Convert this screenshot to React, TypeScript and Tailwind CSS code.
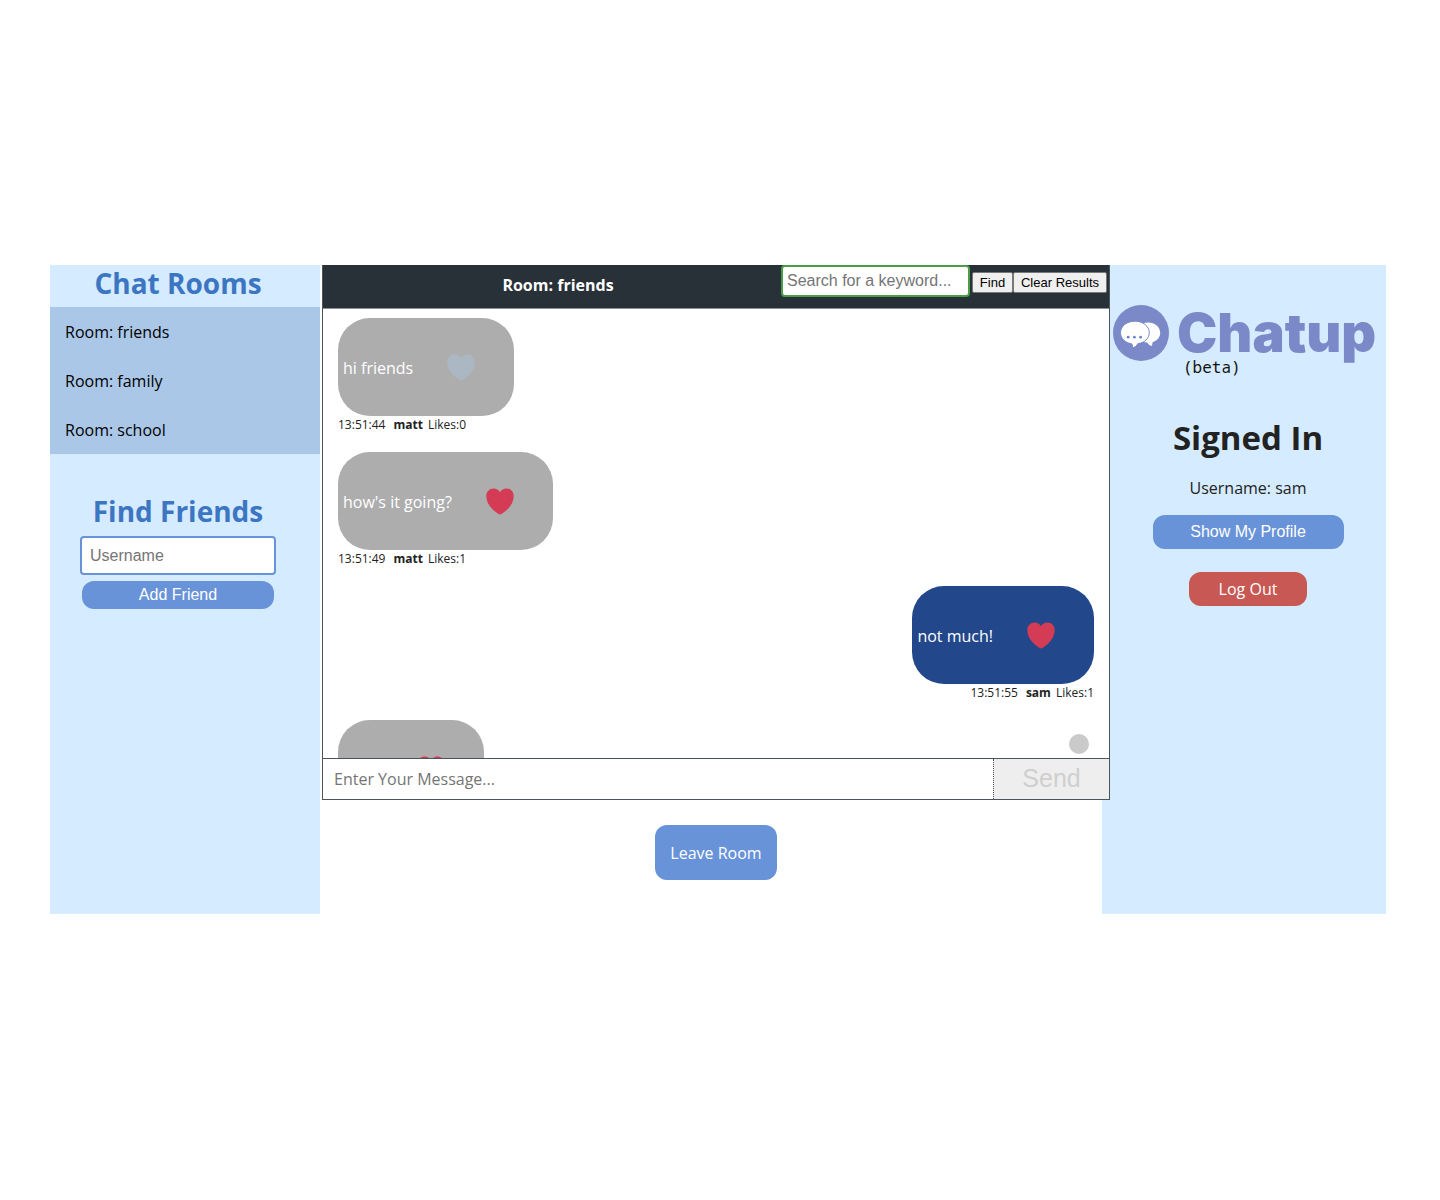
import React from "react";

type Message = {
  text: string;
  time: string;
  user: string;
  likes: number;
  mine?: boolean;
};

const rooms = ["friends", "family", "school"];

const messages: Message[] = [
  { text: "hi friends", time: "13:51:44", user: "matt", likes: 0 },
  { text: "how's it going?", time: "13:51:49", user: "matt", likes: 1 },
  { text: "not much!", time: "13:51:55", user: "sam", likes: 1, mine: true },
  { text: "", time: "", user: "", likes: 1 },
];

function Heart({ liked }: { liked: boolean }) {
  return (
    <svg
      viewBox="0 0 28 27"
      className={liked ? "h-[27px] w-7 fill-[#d33c54]" : "h-[27px] w-7 fill-[#abb8c3]"}
      aria-hidden="true"
    >
      <path d="M14 4.2C12.6 1.6 10.3.4 7.6.4 3.4.4.3 3.7.3 8c0 5.2 2.4 9.3 5.7 12.700 2.700 2.800 5.600 4.900 8 5.900 2.400-1 5.300-3.100 8-5.900 3.300-3.400 5.700-7.500 5.700-12.700 0-4.300-3.100-7.600-7.300-7.600-2.700 0-5 1.200-6.400 3.800z" />
    </svg>
  );
}

function Bubble({ message }: { message: Message }) {
  const { text, time, user, likes, mine } = message;
  return (
    <li className={mine ? "flex h-[134px] shrink-0 flex-col items-end" : "flex h-[134px] shrink-0 flex-col items-start"}>
      <div
        className={
          mine
            ? "flex h-[98px] items-center gap-[34px] rounded-[32px] bg-[#22478a] pt-px pr-[39px] pl-[5px] text-white"
            : "flex h-[98px] items-center gap-[34px] rounded-[32px] bg-[#adadad] pt-px pr-[39px] pl-[5px] text-white"
        }
      >
        <span className="min-w-10">{text}</span>
        <button type="button" aria-label="Like message">
          <Heart liked={likes > 0} />
        </button>
      </div>
      {user && (
        <p className="flex text-xs leading-[18px] text-[#222]">
          <span className="mr-2">{time}</span>
          <b className="mr-[5px]">{user}</b>
          <span>Likes:{likes}</span>
        </p>
      )}
    </li>
  );
}

function Logo() {
  return (
    <div className="mt-10 w-full pl-[3px]">
      <div className="flex h-14 items-center gap-2">
        <svg viewBox="0 0 56 56" className="size-14 shrink-0" aria-hidden="true">
          <circle cx="28" cy="28" r="28" fill="#7b89c8" />
          <path
            d="M35 17.500c7 0 12.200 4.400 12.200 10.300 0 4.500-3 8-7.700 9.500.1 1.400-.2 2.600-1 3.700-2-.7-3.300-1.800-4-3.300C28 37.300 23 33.300 23 27.800c0-5.900 5-10.300 12-10.300z"
            fill="#fff"
          />
          <path
            d="M21.900 16.200c8.100 0 14.400 5 14.400 11.400 0 5.700-4.900 10.300-11.600 11.200-1 2.100-2.700 3.400-5.400 4.200.3-1.400.2-2.700-.4-4.100C12.200 38 7.500 33.300 7.500 27.600c0-6.400 6.300-11.400 14.400-11.400z"
            fill="#fff"
            stroke="#7b89c8"
            strokeWidth="1"
          />
          <circle cx="15.200" cy="32.200" r="1.400" fill="#6a86cc" />
          <circle cx="21.400" cy="32.200" r="1.400" fill="#6a86cc" />
          <circle cx="27.600" cy="32.200" r="1.400" fill="#6a86cc" />
        </svg>
        <span className="font-['Inter','Liberation_Sans',sans-serif] text-[54px] leading-none font-black text-[#7b89c8]">
          Chatup
        </span>
      </div>
      <p className="w-fit pl-[70px] font-['Noto_Sans_Mono','DejaVu_Sans_Mono',monospace] text-base leading-3 text-[#111]">
        (beta)
      </p>
    </div>
  );
}

export default function App() {
  return (
    <div className="min-h-screen bg-white pt-[265px] pr-[54px] pb-10 pl-[50px] font-['Open_Sans',sans-serif] text-base text-[#222]">
      <div className="flex min-h-[649px]">
        <aside className="w-[270px] shrink-0 bg-[#d5ebff]">
          <h2 className="h-[42px] pr-3.5 text-center text-[28px] leading-9 font-bold text-[#3c76c2]">
            Chat Rooms
          </h2>
          <ul className="bg-[#abc7e8] text-black">
            {rooms.map((room) => (
              <li key={room}>
                <button type="button" className="block h-[49px] w-full px-[15px] text-left">
                  Room: {room}
                </button>
              </li>
            ))}
          </ul>
          <form className="mt-9 flex flex-col items-center pr-3.5" onSubmit={(e) => e.preventDefault()}>
            <h2 className="text-[28px] leading-[42px] font-bold text-[#3c76c2]">Find Friends</h2>
            <input
              type="text"
              aria-label="Username"
              placeholder="Username"
              className="mt-1 h-[39px] w-[196px] rounded border-2 border-[#6893d9] bg-white px-2 font-['Liberation_Sans',sans-serif] placeholder:text-[#757575]"
            />
            <button
              type="submit"
              className="mt-1.5 h-7 w-48 rounded-xl bg-[#6893d9] font-['Liberation_Sans',sans-serif] text-white"
            >
              Add Friend
            </button>
          </form>
        </aside>

        <main className="flex min-w-0 flex-1 flex-col items-center">
          <section className="relative z-10 -mr-2 ml-0.5 self-stretch border border-t-0 border-[#4b5459] bg-white">
            <header className="flex h-11 border-b border-[#8b9094] bg-[#283138] pr-0.5">
              <h1 className="flex-1 pl-3 text-center leading-[41px] font-bold text-white">Room: friends</h1>
              <form className="flex h-8" onSubmit={(e) => e.preventDefault()}>
                <input
                  type="text"
                  aria-label="Search for a keyword"
                  placeholder="Search for a keyword..."
                  className="mr-0.5 h-8 w-[189px] rounded border-2 border-[#4b9e46] bg-white px-1 font-['Liberation_Sans',sans-serif] placeholder:text-[#757575]"
                />
                <button
                  type="submit"
                  className="mt-[7px] h-[21px] w-[41px] rounded-xs border border-[#777] bg-[#efefef] font-['Liberation_Sans',sans-serif] text-[13px] leading-none text-black"
                >
                  Find
                </button>
                <button
                  type="button"
                  className="mt-[7px] h-[21px] w-[94px] rounded-xs border border-[#777] bg-[#efefef] font-['Liberation_Sans',sans-serif] text-[13px] leading-none text-black"
                >
                  Clear Results
                </button>
              </form>
            </header>
            <div className="relative">
              <ul className="flex h-[449px] flex-col overflow-hidden px-[15px] pt-[9px]">
                {messages.map((message, i) => (
                  <Bubble key={i} message={message} />
                ))}
              </ul>
              <button
                type="button"
                aria-label="Scroll to latest message"
                className="absolute right-5 bottom-1 size-5 rounded-full bg-[#cacaca]"
              />
            </div>
            <form className="flex h-[41px] border-t border-[#4b5459]" onSubmit={(e) => e.preventDefault()}>
              <input
                type="text"
                aria-label="Message"
                placeholder="Enter Your Message..."
                className="min-w-0 flex-1 bg-white px-[11px] placeholder:text-[#757575]"
              />
              <button
                type="submit"
                disabled
                className="w-[116px] border-l border-dotted border-[#4b5459] bg-[#eeeeee] font-['Liberation_Sans',sans-serif] text-[25px] text-[#cfcfcf]"
              >
                Send
              </button>
            </form>
          </section>
          <button type="button" className="mt-[25px] -mr-2.5 h-[55px] w-[122px] rounded-xl bg-[#6893d9] text-white">
            Leave Room
          </button>
        </main>

        <aside className="flex w-[284px] shrink-0 flex-col items-center bg-[#d5ebff] pl-2">
          <Logo />
          <h2 className="mt-10 text-[33px] leading-[50px] font-bold">Signed In</h2>
          <p className="mt-[13px] leading-6">Username: sam</p>
          <button
            type="button"
            className="mt-[15px] h-[34px] w-[191px] rounded-xl bg-[#6893d9] font-['Liberation_Sans',sans-serif] text-white"
          >
            Show My Profile
          </button>
          <button type="button" className="mt-[23px] h-[34px] w-[118px] rounded-xl bg-[#c75854] text-white">
            Log Out
          </button>
        </aside>
      </div>
    </div>
  );
}
